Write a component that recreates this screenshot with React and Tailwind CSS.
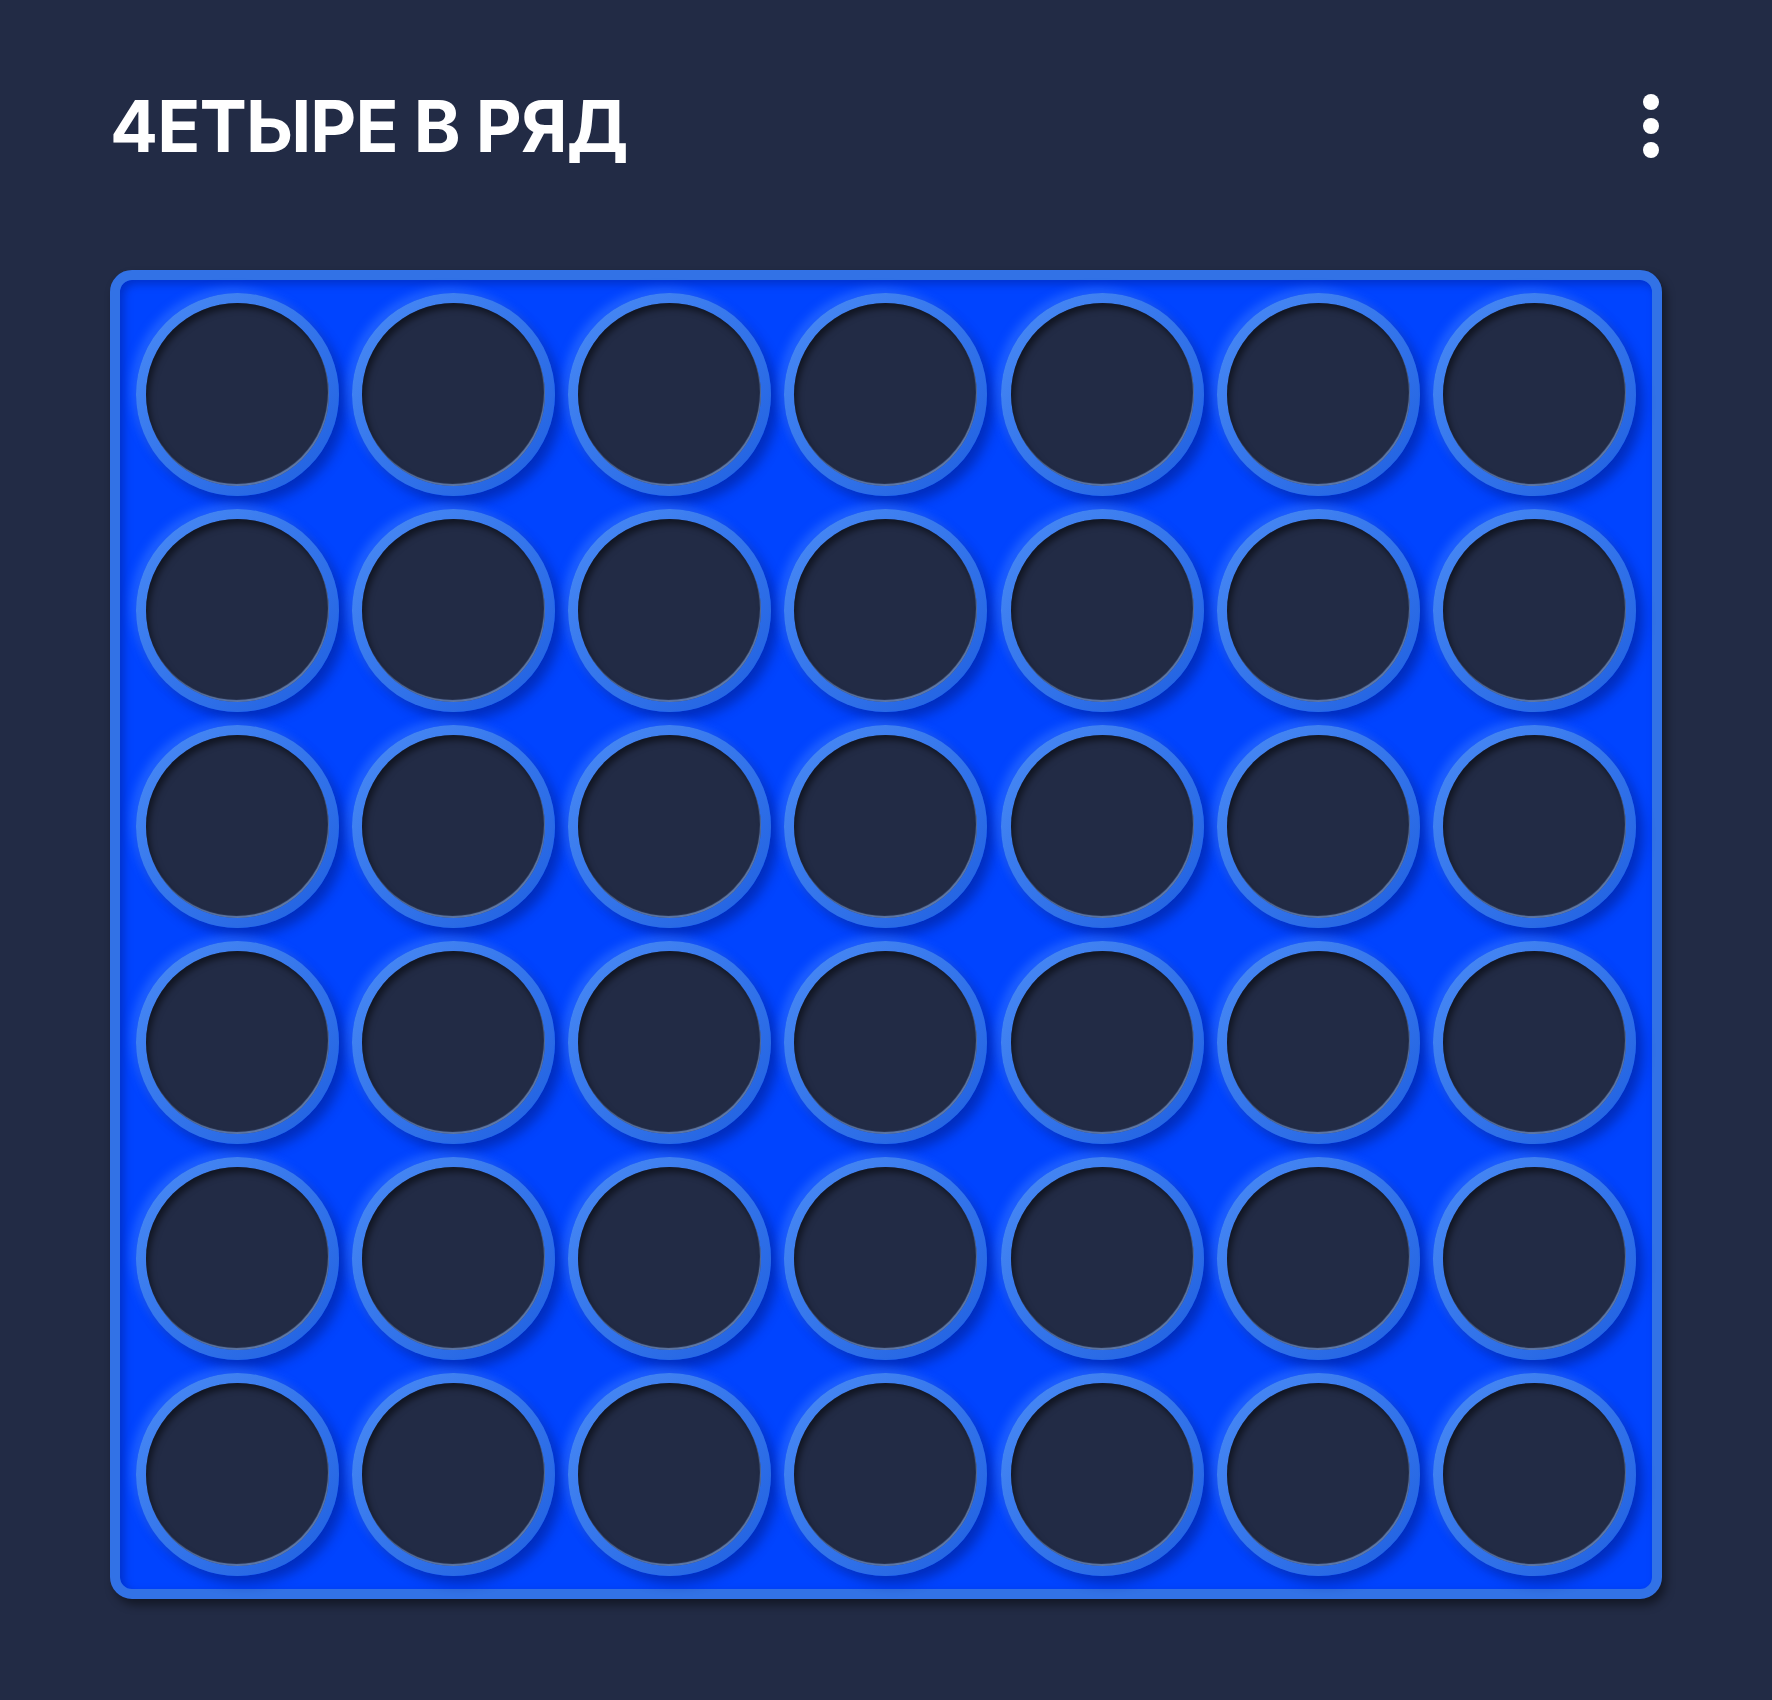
import React from "react";

const ROWS = 6;
const COLS = 7;

function Cell() {
  return (
    <div className="w-[203px] h-[203px] rounded-full p-[10px] bg-gradient-to-br from-[#4a8bf6] to-[#1f5fe0] shadow-[7px_8px_12px_rgba(0,18,110,0.45),-5px_-5px_10px_rgba(90,150,255,0.35)]">
      <div className="w-full h-full rounded-full bg-[#222b45] shadow-[inset_3px_5px_6px_rgba(0,0,0,0.5),inset_-1px_-2px_1px_rgba(150,190,255,0.55)]" />
    </div>
  );
}

export default function App() {
  const cells = Array.from({ length: ROWS * COLS });

  return (
    <div className="min-h-screen bg-[#222b45] px-[110px] pt-[76px] pb-[100px]" style={{ fontFamily: "Inter, 'Noto Sans', sans-serif" }}>
      {/* Header */}
      <header className="h-[100px] flex items-center justify-between">
        <h1 className="text-white font-bold text-[71px] leading-none tracking-[-0.012em]">
          4ЕТЫРЕ В РЯД
        </h1>
        <button className="flex flex-col items-center gap-[8px] mr-[3px]">
          <span className="w-[16px] h-[16px] rounded-full bg-white" />
          <span className="w-[16px] h-[16px] rounded-full bg-white" />
          <span className="w-[16px] h-[16px] rounded-full bg-white" />
        </button>
      </header>

      {/* Board */}
      <div className="mt-[94px] rounded-[22px] border-[10px] border-[#3272e6] bg-[#0044ff] px-[16px] py-[13px] shadow-[4px_6px_10px_rgba(0,0,0,0.45),inset_4px_4px_8px_rgba(0,20,120,0.4)]">
        <div className="grid grid-cols-7 gap-[13px] justify-center">
          {cells.map((_, i) => (
            <Cell key={i} />
          ))}
        </div>
      </div>
    </div>
  );
}
